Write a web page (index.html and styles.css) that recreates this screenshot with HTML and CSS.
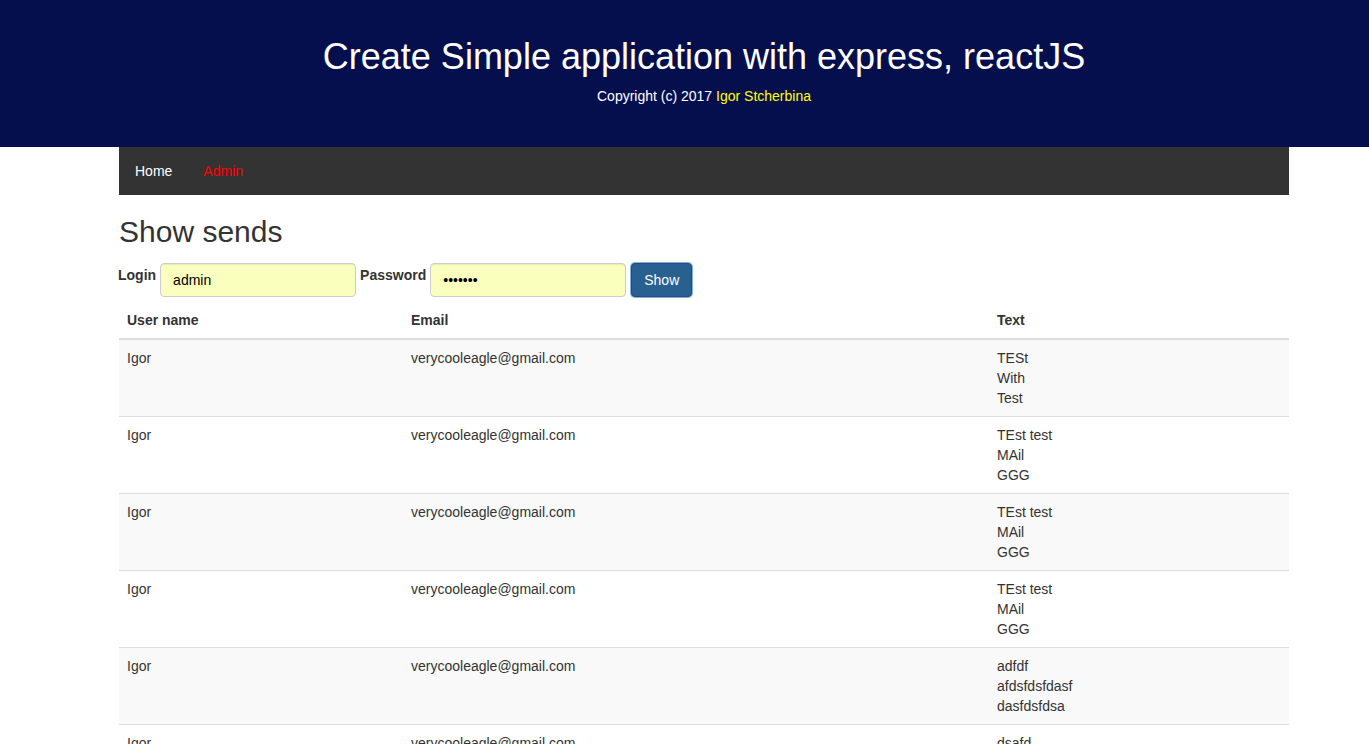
FILE: index.html
```html
<!DOCTYPE html>
<html lang="en">
<head>
<meta charset="utf-8">
<title>Create Simple application with express, reactJS</title>
<link rel="stylesheet" href="styles.css">
</head>
<body>
<header class="site-header">
  <div class="shell">
    <div class="container header-inner">
      <h1 class="site-title">Create Simple application with express, reactJS</h1>
      <p class="copyright">Copyright (c) 2017 <a class="author" href="#">Igor Stcherbina</a></p>
    </div>
  </div>
</header>
<div class="shell">
  <div class="container">
    <nav class="navbar">
      <a class="nav-link" href="#">Home</a>
      <a class="nav-link nav-link-active" href="#">Admin</a>
    </nav>
    <h2 class="page-title">Show sends</h2>
    <form class="login-form">
      <label class="form-label" for="login">Login</label>
      <input class="form-control" id="login" type="text" value="admin">
      <label class="form-label" for="password">Password</label>
      <input class="form-control" id="password" type="password" value="1234567">
      <button class="btn btn-primary" type="button">Show</button>
    </form>
    <table class="table">
      <thead>
        <tr>
          <th class="col-user">User name</th>
          <th class="col-email">Email</th>
          <th class="col-text">Text</th>
        </tr>
      </thead>
      <tbody>
        <tr>
          <td>Igor</td>
          <td>verycooleagle@gmail.com</td>
          <td>TESt<br>With<br>Test</td>
        </tr>
        <tr>
          <td>Igor</td>
          <td>verycooleagle@gmail.com</td>
          <td>TEst test<br>MAil<br>GGG</td>
        </tr>
        <tr>
          <td>Igor</td>
          <td>verycooleagle@gmail.com</td>
          <td>TEst test<br>MAil<br>GGG</td>
        </tr>
        <tr>
          <td>Igor</td>
          <td>verycooleagle@gmail.com</td>
          <td>TEst test<br>MAil<br>GGG</td>
        </tr>
        <tr>
          <td>Igor</td>
          <td>verycooleagle@gmail.com</td>
          <td>adfdf<br>afdsfdsfdasf<br>dasfdsfdsa</td>
        </tr>
        <tr>
          <td>Igor</td>
          <td>verycooleagle@gmail.com</td>
          <td>dsafd<br>dsafdsaf<br>dsaf</td>
        </tr>
      </tbody>
    </table>
  </div>
</div>
</body>
</html>
```
FILE: styles.css
```css
html, body {
  margin: 0;
  padding: 0;
}
body {
  font-family: "Liberation Sans", Arial, Helvetica, sans-serif;
  font-size: 14px;
  line-height: 20px;
  color: #333;
  background: #fff;
}
* { box-sizing: border-box; }

.shell {
  padding-left: 39px;
}
.container {
  width: 1170px;
  margin: 0 auto;
}

.site-header {
  background: #060f4e;
  color: #fff;
}
.header-inner {
  text-align: center;
  padding: 37px 0 41px;
}
.site-title {
  margin: 0;
  font-size: 36px;
  font-weight: normal;
  line-height: 39.6px;
}
.copyright {
  margin: 9px 0 0;
  font-size: 14px;
  line-height: 20px;
}
.author {
  color: #ffff00;
  text-decoration: none;
}

.navbar {
  display: flex;
  background: #333;
  height: 48px;
  padding-left: 1px;
}
.nav-link {
  display: block;
  padding: 14px 16px 14px 15px;
  line-height: 20px;
  color: #fff;
  text-decoration: none;
}
.nav-link-active {
  color: #ff0000;
}

.page-title {
  margin: 20px 0 10px;
  font-size: 30px;
  font-weight: normal;
  line-height: 33px;
  color: #333;
}

.login-form {
  display: flex;
  align-items: flex-start;
  gap: 4px;
  margin: 0 0 0 -1px;
  padding: 5px 0;
}
.form-label {
  font-weight: bold;
  padding-top: 2px;
  line-height: 20px;
}
.form-control {
  width: 196px;
  height: 34px;
  padding: 6px 12px;
  font-family: inherit;
  font-size: 14px;
  line-height: 20px;
  color: #000;
  background: #faffbd;
  border: 1px solid #ccc;
  border-radius: 4px;
  box-shadow: inset 0 1px 1px rgba(0,0,0,.075);
  outline: none;
}
.btn {
  height: 34px;
  padding: 6px 12px;
  font-family: inherit;
  font-size: 14px;
  line-height: 20px;
  border-radius: 4px;
  cursor: pointer;
}
.btn-primary {
  margin-left: 1px;
  color: #fff;
  background: #286090;
  border: 1px solid #204d74;
  box-shadow: 0 0 0 1px #86aee8;
}

.table {
  width: 1170px;
  border-collapse: collapse;
  table-layout: fixed;
  margin-bottom: 20px;
}
.col-user { width: 284px; }
.col-email { width: 586px; }
.col-text { width: 300px; }
.table th {
  text-align: left;
  font-weight: bold;
  padding: 8px;
  line-height: 20px;
  vertical-align: bottom;
  border-bottom: 2px solid #ddd;
}
.table td {
  padding: 8px;
  line-height: 20px;
  vertical-align: top;
  border-top: 1px solid #ddd;
}
.table tbody tr:nth-child(odd) {
  background: #f9f9f9;
}
```
